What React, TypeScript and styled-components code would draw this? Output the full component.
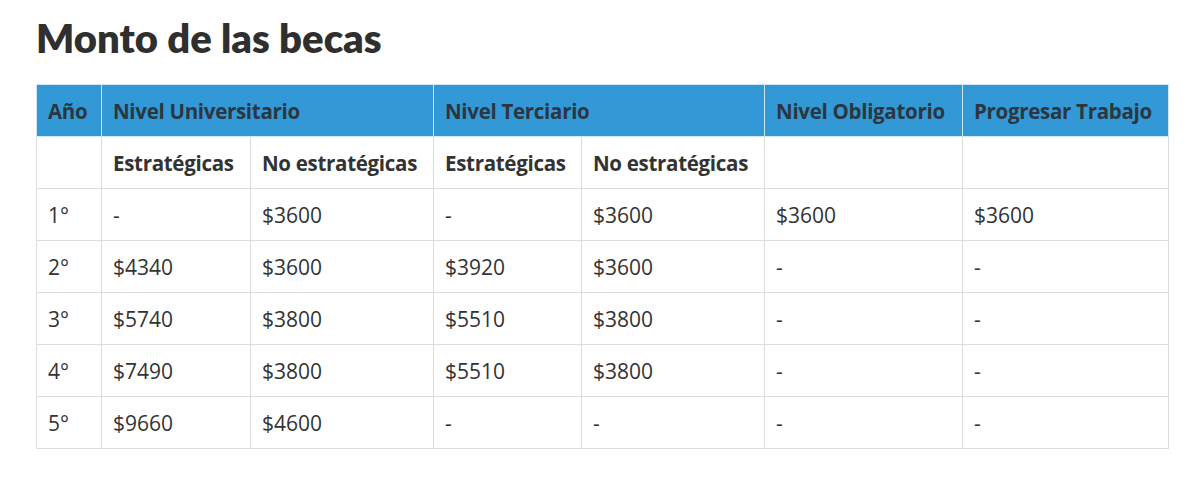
import React from "react";
import styled, { createGlobalStyle } from "styled-components";

// styled-components----------------------------------------------------------------

const GlobalStyle = createGlobalStyle`
  body {
    margin: 0;
    background: #ffffff;
    font-family: "Open Sans", "Noto Sans", sans-serif;
    color: #333333;
  }
`;

const Wrapper = styled.section`
  padding: 14px 32px 0 36px;
`;

const Title = styled.h2`
  margin: 0 0 22px;
  font-family: Lato, "Open Sans", sans-serif;
  font-size: 40px;
  line-height: 48px;
  font-weight: 800;
  color: #2f2f2f;
`;

const Table = styled.table`
  border-collapse: collapse;
  table-layout: fixed;
  width: 1132px;
`;

const HeadCell = styled.th`
  background: #3399d6;
  border: 1px solid #cfe6f5;
  height: 51px;
  padding: 0 11px;
  text-align: left;
  font-size: 20.5px;
  font-weight: 700;
  letter-spacing: -0.3px;
  white-space: nowrap;
  color: #2b3640;
`;

const SubCell = styled.th`
  border: 1px solid #dddddd;
  height: 51px;
  padding: 0 11px;
  text-align: left;
  font-size: 20.5px;
  font-weight: 700;
  letter-spacing: -0.3px;
  white-space: nowrap;
  color: #333333;
`;

const Cell = styled.td`
  border: 1px solid #dddddd;
  height: 51px;
  padding: 0 11px;
  font-size: 21px;
  font-weight: 400;
  white-space: nowrap;
  color: #333333;
`;

// ---------------------------------------------------------------------------------

const widths = [65, 149, 183, 148, 183, 198, 206];

const rows = [
  ["1°", "-", "$3600", "-", "$3600", "$3600", "$3600"],
  ["2°", "$4340", "$3600", "$3920", "$3600", "-", "-"],
  ["3°", "$5740", "$3800", "$5510", "$3800", "-", "-"],
  ["4°", "$7490", "$3800", "$5510", "$3800", "-", "-"],
  ["5°", "$9660", "$4600", "-", "-", "-", "-"],
];

export default function App() {
  return (
    <>
      <GlobalStyle />
      <Wrapper>
        <Title>Monto de las becas</Title>
        <Table>
          <colgroup>
            {widths.map((w, i) => (
              <col key={i} style={{ width: w }} />
            ))}
          </colgroup>
          <thead>
            <tr>
              <HeadCell>Año</HeadCell>
              <HeadCell colSpan={2}>Nivel Universitario</HeadCell>
              <HeadCell colSpan={2}>Nivel Terciario</HeadCell>
              <HeadCell>Nivel Obligatorio</HeadCell>
              <HeadCell>Progresar Trabajo</HeadCell>
            </tr>
          </thead>
          <tbody>
            <tr>
              <SubCell />
              <SubCell>Estratégicas</SubCell>
              <SubCell>No estratégicas</SubCell>
              <SubCell>Estratégicas</SubCell>
              <SubCell>No estratégicas</SubCell>
              <SubCell />
              <SubCell />
            </tr>
            {rows.map((r) => (
              <tr key={r[0]}>
                {r.map((v, i) => (
                  <Cell key={i}>{v}</Cell>
                ))}
              </tr>
            ))}
          </tbody>
        </Table>
      </Wrapper>
    </>
  );
}
